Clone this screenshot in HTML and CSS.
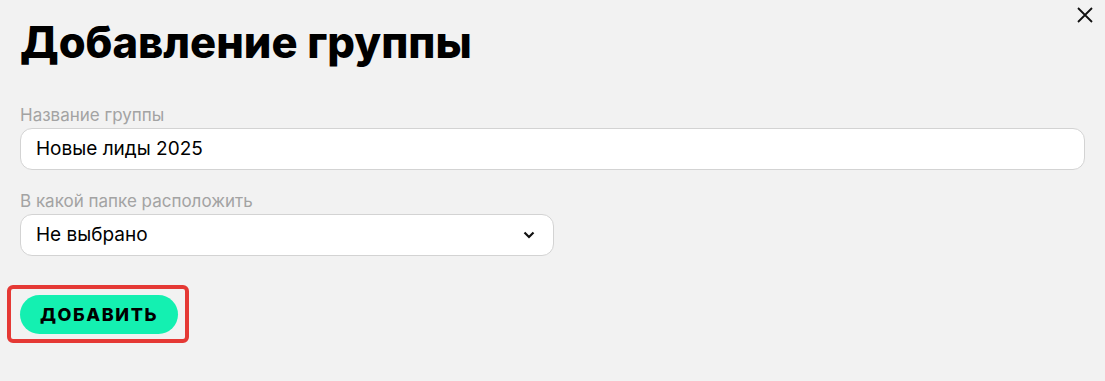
FILE: index.html
```html
<!DOCTYPE html>
<html lang="ru">
<head>
    <meta charset="UTF-8">
    <title>Добавление группы</title>
    <link rel="stylesheet" href="styles.css">
</head>
<body>
<div class="modal">
    <a href="" class="close" title="Закрыть">
        <svg width="18" height="18" viewBox="0 0 18 18"><path d="M2 2L16 16M16 2L2 16" stroke="#111" stroke-width="1.8" fill="none"/></svg>
    </a>
    <h1 class="title">Добавление группы</h1>

    <div class="field">
        <label class="field-label">Название группы</label>
        <div class="input">Новые лиды 2025</div>
    </div>

    <div class="field">
        <label class="field-label">В какой папке расположить</label>
        <div class="input select">
            <span>Не выбрано</span>
            <svg width="12" height="8" viewBox="0 0 12 8"><path d="M1.5 1.5L6 6L10.5 1.5" stroke="#111" stroke-width="2.2" fill="none"/></svg>
        </div>
    </div>

    <div class="actions">
        <span class="highlight">
            <button class="btn">ДОБАВИТЬ</button>
        </span>
    </div>
</div>
</body>
</html>
```

FILE: styles.css
```css
*{
    padding: 0;
    margin: 0;
    box-sizing: border-box;
}
html, body{
    background: #f2f2f2;
}
.modal{
    position: relative;
    padding: 14px 20px 20px 20px;
    font-family: Inter, "Noto Sans", sans-serif;
}
.close{
    position: absolute;
    top: 6px;
    right: 11px;
    display: block;
    width: 18px;
    height: 18px;
}
.title{
    font-size: 43.5px;
    font-weight: 800;
    color: #000;
    line-height: 56px;
    letter-spacing: 0;
    margin-bottom: 35px;
}
.field{
    margin-bottom: 21px;
}
.field-label{
    display: block;
    font-size: 17px;
    line-height: 20px;
    color: #a3a3a3;
    margin-bottom: 3px;
}
.input{
    height: 42px;
    background: white;
    border: 1px solid #d3d3d3;
    border-radius: 12px;
    padding: 0 15px;
    font-size: 19px;
    line-height: 40px;
    color: #000;
}
.select{
    width: 534px;
    display: flex;
    justify-content: space-between;
    align-items: center;
    padding-right: 18px;
}
.actions{
    display: flex;
    margin-top: 29px;
}
.highlight{
    display: inline-block;
    margin-left: -13px;
    padding: 6px 7px 5px 9px;
    border: 4px solid #e53935;
    border-radius: 6px;
}
.btn{
    display: block;
    width: 158px;
    height: 39px;
    border: none;
    border-radius: 20px;
    background: #14f0b1;
    color: #000;
    font-family: Inter, sans-serif;
    font-size: 18px;
    font-weight: 800;
    letter-spacing: 1.6px;
}
```
